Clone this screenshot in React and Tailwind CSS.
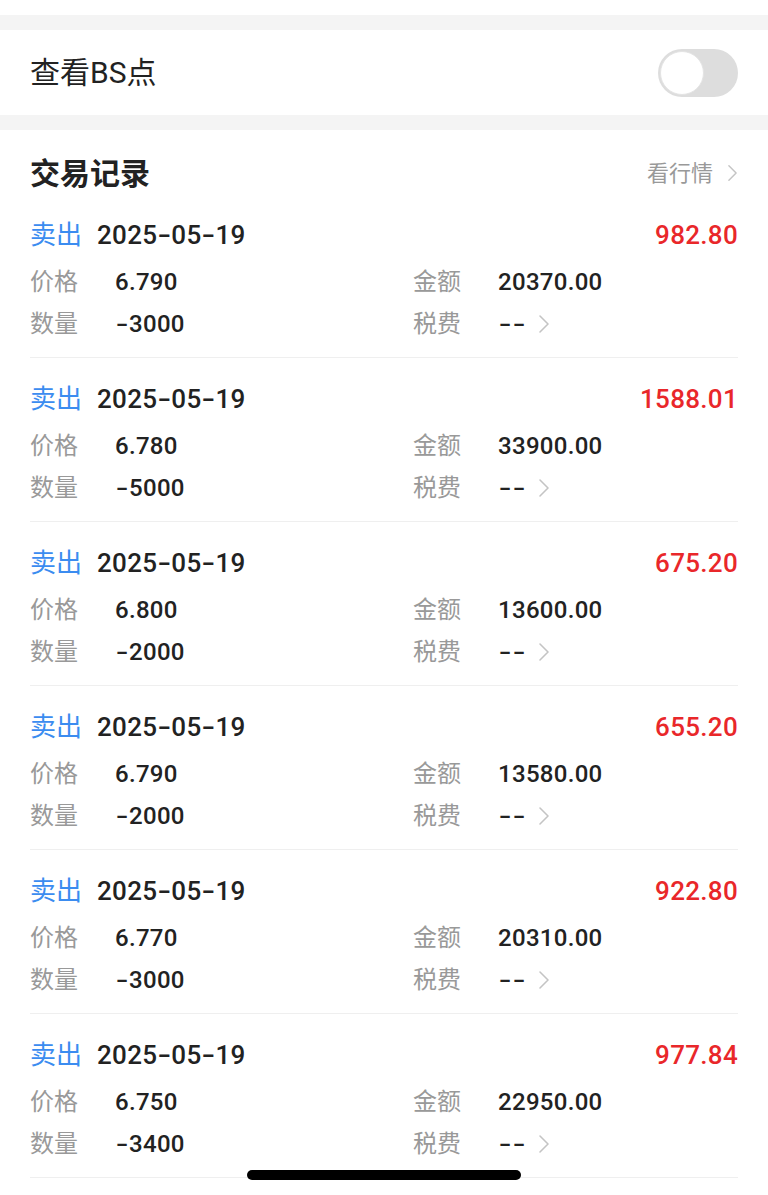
import React from "react";

const trades = [
  { pnl: "982.80", price: "6.790", amount: "20370.00", qty: "-3000" },
  { pnl: "1588.01", price: "6.780", amount: "33900.00", qty: "-5000" },
  { pnl: "675.20", price: "6.800", amount: "13600.00", qty: "-2000" },
  { pnl: "655.20", price: "6.790", amount: "13580.00", qty: "-2000" },
  { pnl: "922.80", price: "6.770", amount: "20310.00", qty: "-3000" },
  { pnl: "977.84", price: "6.750", amount: "22950.00", qty: "-3400" },
];

const font = { fontFamily: "Roboto, 'Noto Sans CJK SC', sans-serif" };

function Chevron({ className }) {
  return (
    <svg viewBox="0 0 12 20" className={className} fill="none" stroke="currentColor" strokeWidth="1.6" strokeLinecap="round" strokeLinejoin="round">
      <path d="M2 2l8 8-8 8" />
    </svg>
  );
}

function Num({ text, className }) {
  const parts = text.split("-");
  return (
    <span className={className}>
      {parts.map((p, i) => (
        <React.Fragment key={i}>
          {i > 0 && (
            <span className="inline-flex w-[14px] justify-center">
              <span className="inline-block scale-x-150">-</span>
            </span>
          )}
          {p}
        </React.Fragment>
      ))}
    </span>
  );
}

function TradeRow({ t }) {
  return (
    <div className="pt-[23px] first:pt-[1px] pb-[12px] border-b border-[#efefef]">
      <div className="flex items-center justify-between h-[36px]">
        <div className="flex items-center">
          <span className="text-[26px] text-[#3b8cf0] w-[67px]">卖出</span>
          <Num text="2025-05-19" className="text-[26px] font-medium text-[#222] tracking-[0.3px]" />
        </div>
        <span className="text-[26px] font-medium text-[#e9272a] tracking-[0.3px]">{t.pnl}</span>
      </div>
      <div className="mt-[8px] grid grid-cols-2">
        <div className="flex items-center h-[42px]">
          <span className="text-[24px] text-[#999] w-[85px]">价格</span>
          <span className="text-[24px] font-medium text-[#222] tracking-[0.3px]">{t.price}</span>
        </div>
        <div className="flex items-center h-[42px] pl-[29px]">
          <span className="text-[24px] text-[#999] w-[85px]">金额</span>
          <span className="text-[24px] font-medium text-[#222] tracking-[0.3px]">{t.amount}</span>
        </div>
        <div className="flex items-center h-[42px]">
          <span className="text-[24px] text-[#999] w-[85px]">数量</span>
          <Num text={t.qty} className="text-[24px] font-medium text-[#222] tracking-[0.3px]" />
        </div>
        <div className="flex items-center h-[42px] pl-[29px]">
          <span className="text-[24px] text-[#999] w-[85px]">税费</span>
          <Num text="--" className="text-[24px] font-medium text-[#222]" />
          <Chevron className="ml-[12px] w-[12px] h-[20px] text-[#c4c4c4]" />
        </div>
      </div>
    </div>
  );
}

export default function App() {
  return (
    <div className="relative w-[768px] h-[1195px] overflow-hidden bg-white" style={font}>
      <div className="h-[15px] bg-white" />
      <div className="h-[15px] bg-[#f4f4f4]" />

      {/* BS toggle */}
      <div className="h-[85px] flex items-center justify-between px-[30px]">
        <span className="text-[30px] text-[#222]">查看BS点</span>
        <div className="w-[80px] h-[48px] rounded-full bg-[#dddddd] p-[2px] flex items-center">
          <div className="w-[44px] h-[44px] rounded-full bg-white border border-[#e4e4e4]" />
        </div>
      </div>

      <div className="h-[15px] bg-[#f4f4f4]" />

      {/* Trade records */}
      <div className="px-[30px]">
        <div className="h-[86px] flex items-center justify-between">
          <span className="text-[30px] font-semibold text-[#222]">交易记录</span>
          <div className="flex items-center text-[#999]">
            <span className="text-[22px]">看行情</span>
            <Chevron className="ml-[14px] w-[11px] h-[18px] text-[#c4c4c4]" />
          </div>
        </div>
        <div>
          {trades.map((t, i) => (
            <TradeRow key={i} t={t} />
          ))}
        </div>
      </div>

      {/* home indicator */}
      <div className="absolute left-[247px] top-[1170px] w-[274px] h-[10px] rounded-full bg-black" />
    </div>
  );
}
